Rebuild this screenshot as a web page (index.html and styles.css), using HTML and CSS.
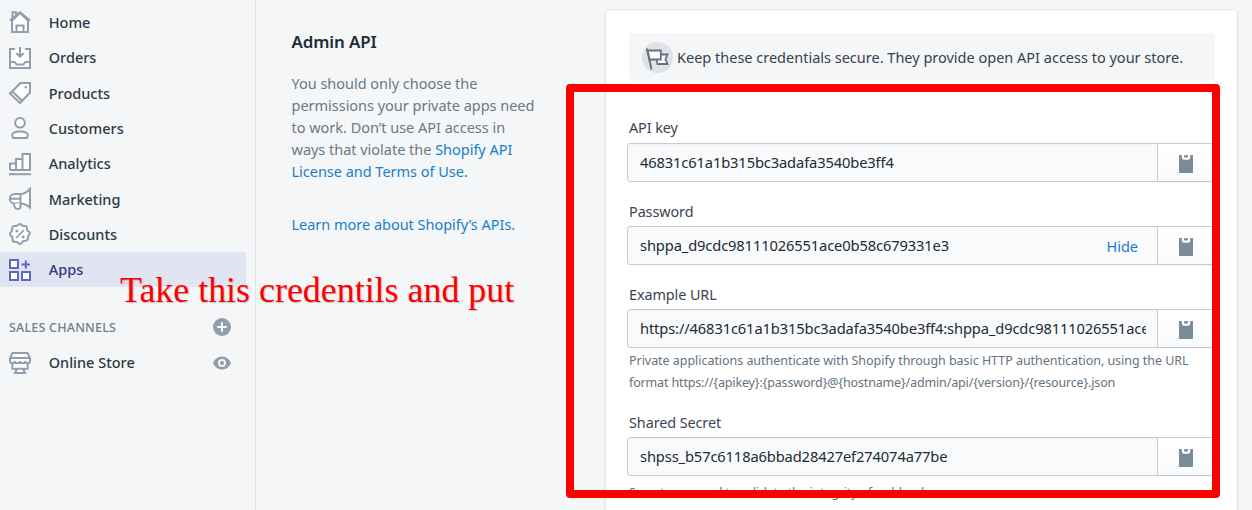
FILE: index.html
```html
<!DOCTYPE html>
<html lang="en">
<head>
<meta charset="utf-8">
<title>Private app credentials</title>
<link rel="stylesheet" href="styles.css">
</head>
<body>
<div class="app">
  <nav class="sidebar">
    <ul class="nav">
      <li class="nav-item"><svg class="icon" viewBox="0 0 22 22"><path fill="#fff" d="M3 9.5 11 2l8 7.5V21H3z"/><path d="M.9 9.6 11 1.2l10.1 8.4M3 8v13h16V8M3.5 6.8V1.2H7v2.6M7.5 20.5v-6h7v6"/></svg><span class="name">Home</span></li>
      <li class="nav-item"><svg class="icon" viewBox="0 0 22 22"><path fill="#fff" stroke="none" d="M1 2h20v19H1z"/><path d="M6 2H1v19h20V2h-5M1 15h4.5l2 2.5h7l2-2.5H21M11 0v9M7.3 6.2 11 9.6l3.7-3.4"/></svg><span class="name">Orders</span></li>
      <li class="nav-item"><svg class="icon" viewBox="0 0 22 22"><path fill="#fff" d="M11.5 1H21v9.5L11 21 1 11.5z"/><path d="m3.5 9.5 9.5 9.3"/><circle cx="16.8" cy="5.3" r="1.2" fill="currentColor" stroke="none"/></svg><span class="name">Products</span></li>
      <li class="nav-item"><svg class="icon" viewBox="0 0 22 22"><circle cx="11" cy="5.8" r="4.8" fill="#fff"/><path fill="#fff" d="M3.2 18.2c0-2.3 3.5-3.6 7.8-3.6s7.8 1.3 7.8 3.6L18.1 21H3.9z"/></svg><span class="name">Customers</span></li>
      <li class="nav-item"><svg class="icon" viewBox="0 0 22 22"><path fill="#fff" d="M1 17v-6.5h6V17M7 17V6h6.5v11M13.5 17V1H21v16H1"/><path d="M0 21.2h22"/></svg><span class="name">Analytics</span></li>
      <li class="nav-item"><svg class="icon" viewBox="0 0 22 22"><path fill="#fff" d="M21 1v18.5c-3-2.8-6-3.9-9.5-4H5.5A4.7 4.7 0 0 1 5.5 6h6C15 6 18 4.3 21 1z"/><path fill="#fff" d="M5 15.5c.2 2.5.8 5.5 3.5 5.5 1.5 0 3-.5 3-2.5v-3"/><path d="M11.5 6v9.500M1 10.700h10.500"/></svg><span class="name">Marketing</span></li>
      <li class="nav-item"><svg class="icon" viewBox="0 0 22 22"><path fill="#fff" d="M11 1c1.300 0 1.700 1.600 3 2 1.200.4 2.500-.5 3.400.4s.1 2.300.6 3.500c.5 1.300 3 1.800 3 3.100s-1.700 1.900-2 3.200c-.3 1.200.3 2.900-.6 3.800s-2.600.4-3.700 1c-1.200.6-2.300 3-3.700 3s-1.900-1.600-3.100-2c-1.300-.4-3 .1-3.900-.8s0-2.500-.5-3.700C3 13.300 1 12.300 1 11s1.600-2.100 2-3.400c.4-1.200-.2-3.100.7-4s2.600-.2 3.800-.7C8.700 2.500 9.700 1 11 1z"/><path stroke-width="1.700" d="m7.200 15 7.600-8"/><g fill="currentColor" stroke="none"><circle cx="7.800" cy="8" r="1.500"/><circle cx="14.200" cy="14" r="1.500"/></g></svg><span class="name">Discounts</span></li>
      <li class="nav-item active"><svg class="icon" viewBox="0 0 22 22"><path fill="#fff" d="M1 1h8v8H1zM1 13h8v8H1zM13 13h8v8h-8z"/><path d="M16.800 1.500v8M12.500 5.500H21"/></svg><span class="name">Apps</span></li>
    </ul>
    <div class="channels-head"><span class="channels-title">SALES CHANNELS</span><svg class="small-icon" viewBox="0 0 18 18"><circle cx="9" cy="9" r="9" fill="#919eab"/><path d="M9 4.200v9.600M4.200 9h9.600" stroke="#fff" stroke-width="2"/></svg></div>
    <div class="nav-item channel"><svg class="icon" viewBox="0 0 22 22"><path fill="#fff" d="M3.300 9v7.700h15.400V9M8 16.700 6 21h10l-2-4.300"/><path fill="#fff" d="M3.500 1h15L21 6v3c0 1.500-1 2.300-2.300 2.300-1.500 0-2.500-.8-2.500-2.300 0 1.500-1 2.300-2.600 2.300S11 10.500 11 9c0 1.500-1 2.300-2.600 2.300S5.800 10.500 5.800 9c0 1.500-1 2.300-2.500 2.300S1 10.500 1 9V6z"/><path d="M1 6h20M5 21h12"/></svg><span class="name">Online Store</span><svg class="small-icon" viewBox="0 0 18 18"><path fill="#919eab" d="M0 9c1.500-3.800 5-6.600 9-6.600S16.500 5.200 18 9c-1.500 3.800-5 6.600-9 6.600S1.500 12.800 0 9z"/><circle cx="9" cy="9" r="4" fill="#f4f6f8"/><circle cx="9" cy="9" r="2.100" fill="#919eab"/></svg></div>
  </nav>
  <main class="content">
    <section class="intro">
      <h2 class="intro-title">Admin API</h2>
      <p class="intro-text">You should only choose the<br>permissions your private apps need<br>to work. Don’t use API access in<br>ways that violate the <a class="link">Shopify API<br>License and Terms of Use.</a></p>
      <p class="intro-text"><a class="link">Learn more about Shopify’s APIs.</a></p>
    </section>
    <section class="card">
      <div class="banner"><svg class="flag" viewBox="0 0 31 31"><circle cx="15.500" cy="15.500" r="15.500" fill="#dfe3e8"/><g fill="#fff" stroke="#637381" stroke-width="1.800"><path d="M14 12.500h11.500l-2 4.800 2 4.700H15.500l-1-4z"/><path d="M5.500 8.500H18.800v9H7.500z"/><path d="M5 6.500 9.500 27.500" stroke-width="2"/></g></svg><span class="banner-text">Keep these credentials secure. They provide open API access to your store.</span></div>
      <div class="field f-key">
        <label class="label">API key</label>
        <div class="control"><div class="input"><span class="value">46831c61a1b315bc3adafa3540be3ff4</span></div><button class="copy"><svg class="clip" viewBox="0 0 14 18"><path d="M0 0h2.800v2.500q0 2.300 2.200 2.300h4q2.200 0 2.200-2.300V0H14v18H0z"/><path d="M5 .3h4v1.400q0 .8-.8.8H5.800q-.8 0-.8-.8z"/></svg></button></div>
      </div>
      <div class="field">
        <label class="label">Password</label>
        <div class="control"><div class="input"><span class="value">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</span><a class="link hide">Hide</a></div><button class="copy"><svg class="clip" viewBox="0 0 14 18"><path d="M0 0h2.800v2.500q0 2.300 2.200 2.300h4q2.200 0 2.200-2.300V0H14v18H0z"/><path d="M5 .3h4v1.400q0 .8-.8.8H5.800q-.8 0-.8-.8z"/></svg></button></div>
      </div>
      <div class="field">
        <label class="label">Example URL</label>
        <div class="control"><div class="input"><span class="value">https://46831c61a1b315bc3adafa3540be3ff4:shppa_d9cdc98111026551ace</span></div><button class="copy"><svg class="clip" viewBox="0 0 14 18"><path d="M0 0h2.800v2.500q0 2.300 2.200 2.300h4q2.200 0 2.200-2.300V0H14v18H0z"/><path d="M5 .3h4v1.400q0 .8-.8.8H5.800q-.8 0-.8-.8z"/></svg></button></div>
        <p class="help"><span class="help-first">Private applications authenticate with Shopify through basic HTTP authentication, using the URL</span><br>format https://{apikey}:{password}@{hostname}/admin/api/{version}/{resource}.json</p>
      </div>
      <div class="field">
        <label class="label">Shared Secret</label>
        <div class="control"><div class="input"><span class="value">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</span></div><button class="copy"><svg class="clip" viewBox="0 0 14 18"><path d="M0 0h2.800v2.500q0 2.300 2.200 2.300h4q2.200 0 2.200-2.300V0H14v18H0z"/><path d="M5 .3h4v1.400q0 .8-.8.8H5.800q-.8 0-.8-.8z"/></svg></button></div>
        <p class="help help-secret">Secrets are used to validate the integrity of webhooks.</p>
      </div>
    </section>
  </main>
  <div class="highlight"></div>
  <div class="note">Take this credentils and put</div>
</div>
</body>
</html>
```
FILE: styles.css
```css
* { box-sizing: border-box; }
body { margin: 0; background: #f4f6f8; font-family: "Noto Sans", sans-serif; font-size: 15px; color: #212b36; }
.app { position: relative; display: flex; width: 1252px; height: 510px; overflow: hidden; }
.sidebar { flex: none; width: 256px; border-right: 1px solid #dfe3e8; padding-top: 4.800px; }
.nav { list-style: none; margin: 0; padding: 0; }
.nav-item { display: flex; align-items: center; width: 246px; height: 35.300px; padding-left: 9px; border-radius: 0 3px 3px 0; font-weight: 500; font-size: 14.500px; color: #2f3943; }
.name { flex: 1; margin: -.8px 0 0 17.700px; white-space: nowrap; }
.icon { flex: none; width: 22px; height: 22px; fill: none; stroke: currentColor; stroke-width: 2; color: #919eab; overflow: visible; }
.active { background: #e1e4f1; color: #2f3b85; }
.active .icon { color: #5c6ac4; }
.channels-head { display: flex; align-items: center; justify-content: space-between; width: 231px; height: 36px; padding-left: 9px; margin-top: 22px; color: #717f8c; font-size: 12.600px; letter-spacing: .15px; font-weight: 500; }
.channels-title { padding-top: 1px; }
.small-icon { flex: none; width: 18px; height: 18px; }
.channel { width: 231px; }
.content { flex: 1; display: flex; padding-left: 35.500px; }
.intro { flex: none; width: 314.500px; padding-top: 29px; }
.intro-title { margin: 0; font-size: 16.900px; line-height: 26px; font-weight: 600; letter-spacing: -.1px; }
.intro-text { margin: 17px 0 31px; font-size: 14.500px; line-height: 22px; letter-spacing: -.02px; color: #6b7985; white-space: nowrap; }
.intro-text + .intro-text { margin-top: 0; }
.link { color: #1a7fc9; }
.card { flex: none; width: 631px; height: 540px; margin-top: 10px; padding: 23px 22px 0 23px; background: #fff; border-radius: 3px; box-shadow: 0 0 0 1px rgba(63,63,68,.05), 0 1px 3px rgba(63,63,68,.15); }
.banner { display: flex; align-items: center; height: 48px; padding-left: 13px; background: #f4f6f8; border-radius: 3px; }
.flag { width: 31px; height: 31px; margin-right: 4px; }
.banner-text { font-size: 14.500px; white-space: nowrap; color: #37424e; }
.field { margin-top: 19px; }
.f-key { margin-top: 36px; }
.label { display: block; height: 22px; margin-bottom: 3px; line-height: 22px; font-size: 14.400px; letter-spacing: -.08px; color: #3a4551; }
.f-key .label { margin-bottom: 4px; }
.control { display: flex; height: 39px; margin-left: -2px; }
.input { flex: none; display: flex; align-items: center; width: 531px; padding: 0 11px 0 12px; border: 1px solid #c4cdd5; border-radius: 3px 0 0 3px; background: #f9fafb; box-shadow: inset 0 1px 0 rgba(99,115,129,.05); font-size: 14.700px; letter-spacing: -.13px; }
.value { flex: 1; margin-top: -1px; overflow: hidden; white-space: nowrap; }
.hide { padding-right: 8px; font-size: 14.500px; letter-spacing: 0; }
.copy { flex: none; width: 57px; margin-left: -1px; padding: 3px 0 0; border: 1px solid #c4cdd5; border-radius: 0 3px 3px 0; background: linear-gradient(#fff, #f9fafb); box-shadow: 0 1px 0 rgba(22,29,37,.05); }
.clip { display: block; width: 14px; height: 18px; margin: 0 auto; fill: #798c9c; }
.help { margin: 2px 0 -1px; font-size: 12.500px; line-height: 22px; letter-spacing: -.15px; color: #637381; white-space: nowrap; }
.help-first { letter-spacing: -.04px; }
.help-secret { margin-top: 6px; letter-spacing: -.19px; }
.highlight { position: absolute; left: 566px; top: 84px; width: 654px; height: 414px; border: 8px solid #f00; border-radius: 4px; }
.note { position: absolute; left: 120px; top: 270px; font: 35.900px/40px "Liberation Serif", serif; color: #f00; white-space: nowrap; text-shadow: 1px 1px 1px rgba(0,0,0,.2); }
```
